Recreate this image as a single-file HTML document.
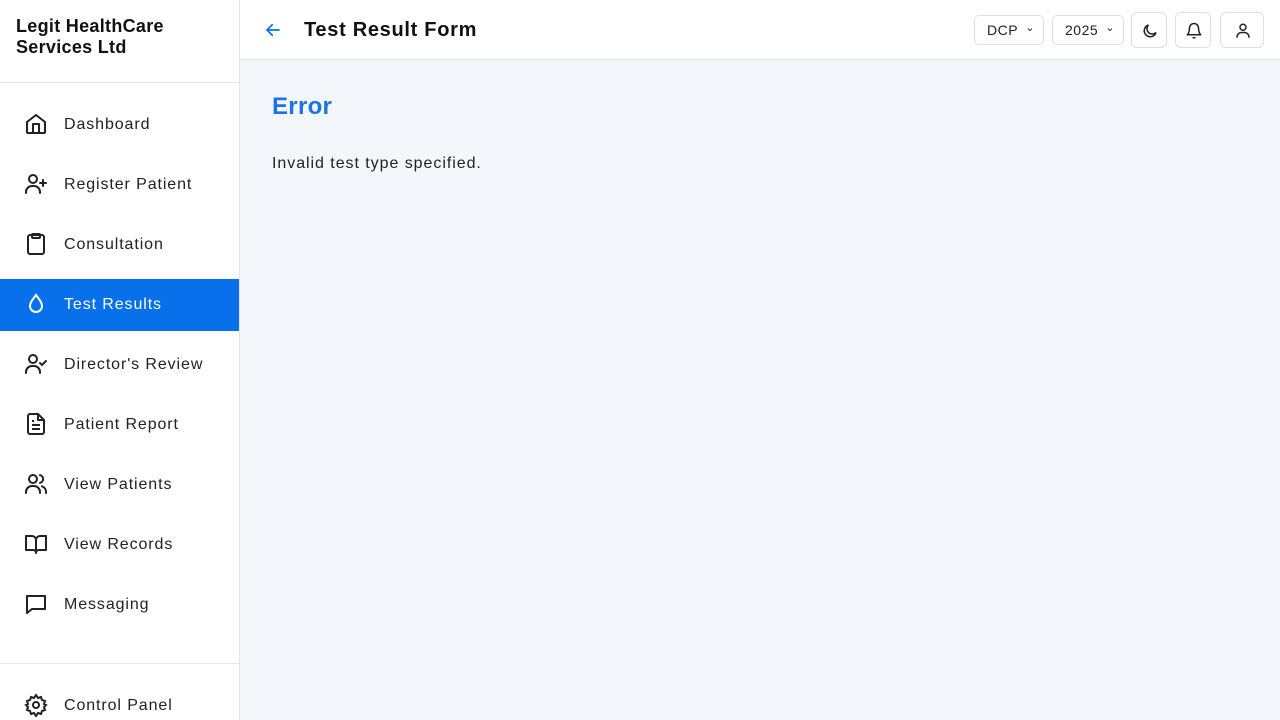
<!DOCTYPE html>
<html><head><style>
*{box-sizing:border-box;margin:0;padding:0}
html,body{width:1280px;height:720px;overflow:hidden}
body{font-family:"Liberation Sans",sans-serif;background:#f3f6fb;color:#1f2328;position:relative}
.sb{position:absolute;left:0;top:0;width:240px;height:720px;background:#fff;border-right:1px solid #e3e5e8}
.logo{position:absolute;left:16px;top:16px;font-weight:bold;font-size:18px;line-height:21px;color:#111;letter-spacing:.3px}
.hr{position:absolute;left:0;width:239px;height:1px;background:#e3e5e8}
.it{position:absolute;left:0;width:239px;height:52px;display:flex;align-items:center;font-size:16px;color:#222;letter-spacing:.9px}
.it svg{position:absolute;left:24px;top:13px}
.it span{position:absolute;left:64px;top:17px}
.act{background:#0870ea;color:#fff}
.top{position:absolute;left:240px;top:0;width:1040px;height:60px;background:#fff;border-bottom:1px solid #e3e5e8}
.title{position:absolute;left:64px;top:19px;font-size:20px;font-weight:bold;color:#111;letter-spacing:.7px}
.sel{position:absolute;top:15px;height:30px;border:1px solid #dcdfe3;border-radius:5px;font-size:14px;color:#222;padding:6px 0 0 12px;letter-spacing:.5px}
.btn{position:absolute;top:12px;width:36px;height:36px;border:1px solid #dcdfe3;border-radius:6px}
.btn svg{position:absolute;left:9px;top:9px}
</style></head><body>
<div class="sb">
<div class="logo">Legit HealthCare<br>Services Ltd</div>
<div class="hr" style="top:82px"></div>
<div class="it" style="top:99px"><svg width="24" height="24" viewBox="0 0 24 24" fill="none" stroke="#222" stroke-width="2" stroke-linejoin="round"><path d="M3 10l9-7 9 7v10a1 1 0 0 1-1 1H4a1 1 0 0 1-1-1z M9 21v-9h6v9"/></svg><span>Dashboard</span></div>
<div class="it" style="top:159px"><svg width="24" height="24" viewBox="0 0 24 24" fill="none" stroke="#222" stroke-width="2" stroke-linecap="round"><circle cx="9" cy="7" r="4"/><path d="M2 21v-1a6 6 0 0 1 6-6h2a6 6 0 0 1 6 6v1M19 8v6M16 11h6"/></svg><span>Register Patient</span></div>
<div class="it" style="top:219px"><svg width="24" height="24" viewBox="0 0 24 24" fill="none" stroke="#222" stroke-width="2"><rect x="4" y="3" width="16" height="19" rx="2"/><rect x="8" y="2" width="8" height="4" rx="1"/></svg><span>Consultation</span></div>
<div class="it act" style="top:279px"><svg width="24" height="24" viewBox="0 0 24 24" fill="none" stroke="#fff" stroke-width="2"><path d="M12 3C9 7 6 10.5 6 14a6 6 0 0 0 12 0c0-3.5-3-7-6-11z"/></svg><span>Test Results</span></div>
<div class="it" style="top:339px"><svg width="24" height="24" viewBox="0 0 24 24" fill="none" stroke="#222" stroke-width="2" stroke-linecap="round"><circle cx="9" cy="7" r="4"/><path d="M2 21v-1a6 6 0 0 1 6-6h2a6 6 0 0 1 6 6v1M16 11l2 2 4-4"/></svg><span>Director's Review</span></div>
<div class="it" style="top:399px"><svg width="24" height="24" viewBox="0 0 24 24" fill="none" stroke="#222" stroke-width="2" stroke-linejoin="round"><path d="M14 2H6a2 2 0 0 0-2 2v16a2 2 0 0 0 2 2h12a2 2 0 0 0 2-2V8z M14 2v6h6 M8 13h8 M8 17h8 M8 9h2"/></svg><span>Patient Report</span></div>
<div class="it" style="top:459px"><svg width="24" height="24" viewBox="0 0 24 24" fill="none" stroke="#222" stroke-width="2" stroke-linecap="round"><circle cx="9" cy="7" r="4"/><path d="M2 21v-1a6 6 0 0 1 6-6h2a6 6 0 0 1 6 6v1M16 3.1a4 4 0 0 1 0 7.8M22 21v-1a6 6 0 0 0-4-5.7"/></svg><span>View Patients</span></div>
<div class="it" style="top:519px"><svg width="24" height="24" viewBox="0 0 24 24" fill="none" stroke="#222" stroke-width="2" stroke-linejoin="round"><path d="M2 4h6a4 4 0 0 1 4 4v13a3 3 0 0 0-3-3H2z M22 4h-6a4 4 0 0 0-4 4v13a3 3 0 0 1 3-3h7z"/></svg><span>View Records</span></div>
<div class="it" style="top:579px"><svg width="24" height="24" viewBox="0 0 24 24" fill="none" stroke="#222" stroke-width="2" stroke-linejoin="round"><path d="M3 4h18v13H8l-5 4z"/></svg><span>Messaging</span></div>
<div class="hr" style="top:663px"></div>
<div class="it" style="top:680px"><svg width="24" height="24" viewBox="0 0 24 24" fill="none" stroke="#222" stroke-width="2"><circle cx="12" cy="12" r="3"/><path d="M12 2l2 3 3-1 1 3 3 1-1 3 2 1-2 2 1 3-3 1-1 3-3-1-2 3-2-3-3 1-1-3-3-1 1-3-2-2 2-1-1-3 3-1 1-3 3 1z"/></svg><span>Control Panel</span></div>
</div>
<div class="top">
<svg style="position:absolute;left:24px;top:21px" width="18" height="18" viewBox="0 0 24 24" fill="none" stroke="#0870ea" stroke-width="2.2" stroke-linecap="round" stroke-linejoin="round"><path d="M20 12H4M11 5l-7 7 7 7"/></svg>
<div class="title">Test Result Form</div>
<div class="sel" style="left:734px;width:70px">DCP <span style="position:absolute;right:8px;top:5px;font-size:11px">&#8964;</span></div>
<div class="sel" style="left:812px;width:72px">2025 <span style="position:absolute;right:8px;top:5px;font-size:11px">&#8964;</span></div>
<div class="btn" style="left:891px"><svg width="18" height="18" viewBox="0 0 24 24" fill="none" stroke="#222" stroke-width="2"><path d="M20 14A8 8 0 1 1 10 4a6 6 0 0 0 10 10z"/></svg></div>
<div class="btn" style="left:935px"><svg width="18" height="18" viewBox="0 0 24 24" fill="none" stroke="#222" stroke-width="2" stroke-linejoin="round"><path d="M6 8a6 6 0 0 1 12 0c0 7 3 9 3 9H3s3-2 3-9M10 21h4"/></svg></div>
<div class="btn" style="left:980px;width:44px"><svg style="left:13px" width="18" height="18" viewBox="0 0 24 24" fill="none" stroke="#222" stroke-width="2"><circle cx="12" cy="7" r="4"/><path d="M4 21v-1a6 6 0 0 1 6-6h4a6 6 0 0 1 6 6v1"/></svg></div>
</div>
<div style="position:absolute;left:272px;top:93px;font-size:24px;font-weight:bold;color:#1a73e8;letter-spacing:.3px">Error</div>
<div style="position:absolute;left:272px;top:155px;font-size:16px;color:#222;letter-spacing:.95px">Invalid test type specified.</div>
</body></html>
